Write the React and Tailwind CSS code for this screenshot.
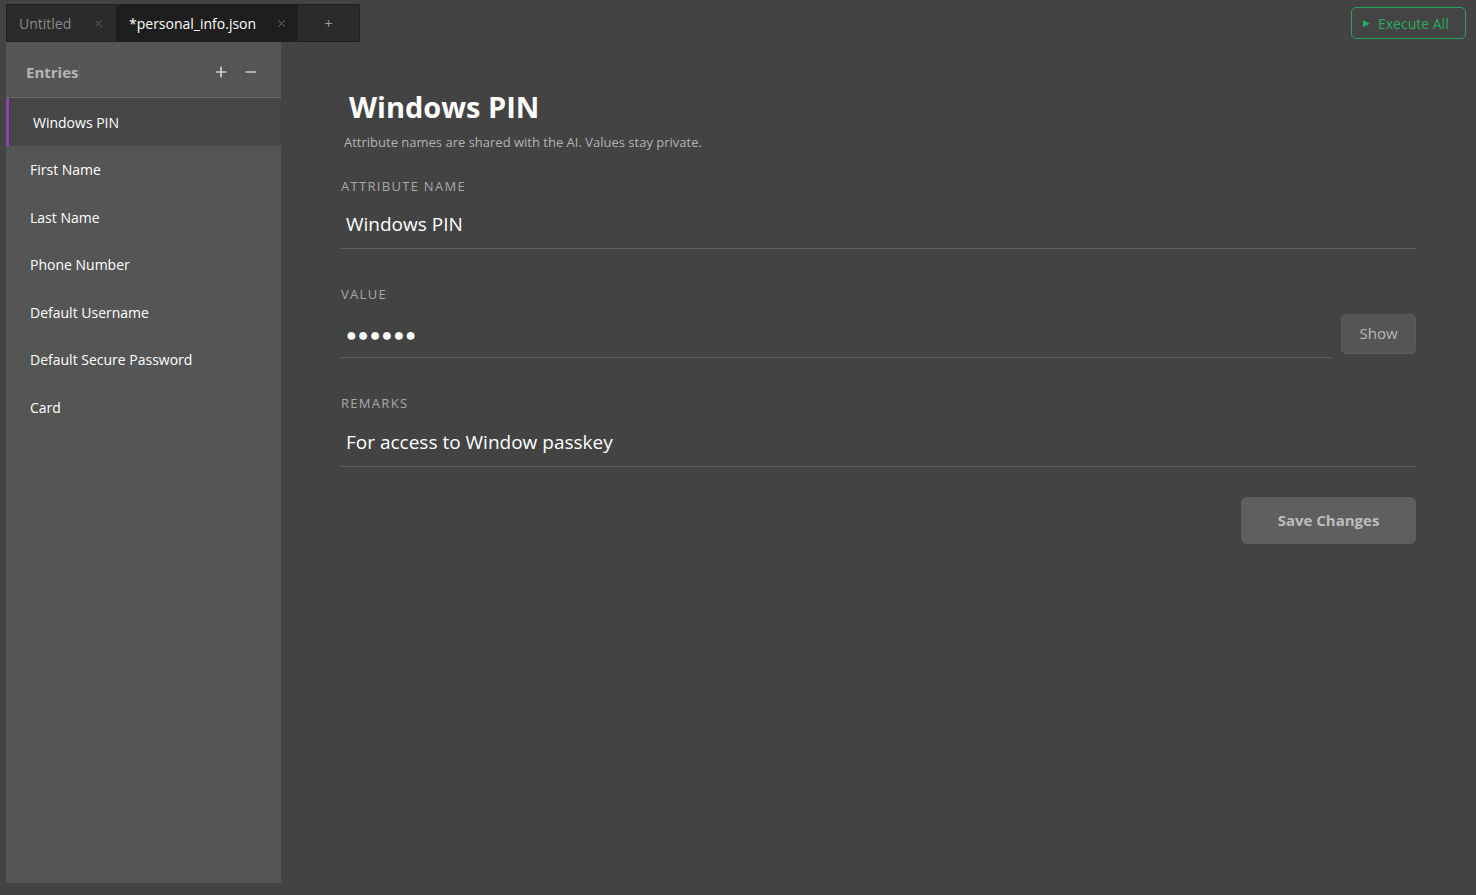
import React, { useState } from 'react';
import { Plus, Minus, X } from 'lucide-react';

const entries = [
  'Windows PIN',
  'First Name',
  'Last Name',
  'Phone Number',
  'Default Username',
  'Default Secure Password',
  'Card',
];

const Field = ({ label, children, className = '' }) => (
  <div className={className}>
    <div className="text-[13px] tracking-[0.1em] text-[#a8a8a8] leading-none">{label}</div>
    {children}
  </div>
);

export default function App() {
  const [selected, setSelected] = useState(0);

  return (
    <div
      className="w-[1476px] h-[895px] bg-[#434343] flex flex-col overflow-hidden text-white"
      style={{ fontFamily: '"Open Sans", "Noto Sans", sans-serif' }}
    >
      {/* Top bar */}
      <div className="flex items-start justify-between pl-[6px] pr-[10px] pt-[4px]">
        <div className="flex h-[38px] w-[354px] bg-[#2b2b2b] border border-[#202020]">
          <div className="flex items-center w-[109px] pl-[12px] pr-[12px] justify-between text-[14px] text-[#8a8a8a]">
            <span>Untitled</span>
            <X className="w-[11px] h-[11px] text-[#6a6a6a]" strokeWidth={2} />
          </div>
          <div className="flex items-center w-[182px] pl-[13px] pr-[11px] justify-between bg-[#1e1e1e] text-[14px] text-white">
            <span>*personal_info.json</span>
            <X className="w-[11px] h-[11px] text-[#777]" strokeWidth={2} />
          </div>
          <div className="flex-1 flex items-center justify-center text-[#9a9a9a] text-[15px]">+</div>
        </div>
        <button className="mt-[3px] h-[32px] w-[115px] flex items-center pl-[11px] gap-[8px] rounded-[5px] border border-[#25a65a] text-[#27ae60] text-[14px] bg-[#444]">
          <span className="text-[9px]">&#9654;</span>
          <span>Execute All</span>
        </button>
      </div>

      <div className="flex flex-1 min-h-0 pl-[6px] pb-[12px]">
        {/* Sidebar */}
        <div className="w-[275px] bg-[#555555] flex flex-col">
          <div className="h-[56px] flex items-center justify-between pl-[20px] pr-[22px] pt-[5px] border-b border-[#666]">
            <span className="text-[15px] font-bold text-[#b5b5b5] pr-[1px] border-r border-[#5e5e5e]">Entries</span>
            <div className="flex items-center gap-[14px] text-[#cfcfcf]">
              <Plus className="w-[16px] h-[16px]" strokeWidth={2.5} />
              <Minus className="w-[16px] h-[16px]" strokeWidth={2.5} />
            </div>
          </div>
          <ul className="flex flex-col">
            {entries.map((name, i) => (
              <li
                key={name}
                onClick={() => setSelected(i)}
                className={
                  i === selected
                    ? 'h-[48px] flex items-center pl-[24px] bg-[#474747] border-l-[3px] border-[#8e44ad] text-[14px] text-white'
                    : 'h-[47.5px] flex items-center pl-[24px] text-[14px] text-white'
                }
              >
                {name}
              </li>
            ))}
          </ul>
        </div>

        {/* Main */}
        <div className="flex-1 pl-[60px] pr-[60px] pt-[45px]">
          <h1 className="text-[29px] font-bold leading-[40px] pl-[8px] text-white">Windows PIN</h1>
          <p className="text-[13px] text-[#b3b3b3] pl-[3px] mt-[6px]">
            Attribute names are shared with the AI. Values stay private.
          </p>

          <Field label="ATTRIBUTE NAME" className="mt-[27px]">
            <div className="h-[48px] flex items-center pl-[5px] border-b border-[#5f5f5f] text-[19px] text-white mt-[8px]">
              Windows PIN
            </div>
          </Field>

          <Field label="VALUE" className="mt-[39px]">
            <div className="flex items-end gap-[10px] mt-[7px]">
              <div className="flex-1 h-[50px] flex items-center pl-[5px] pt-[5px] border-b border-[#5f5f5f] text-[18px] tracking-[1px] text-white">
                ●●●●●●
              </div>
              <button className="mb-[4px] w-[75px] h-[40px] rounded-[5px] bg-[#555] border border-[#5c5c5c] text-[15px] text-[#b8b8b8]">
                Show
              </button>
            </div>
          </Field>

          <Field label="REMARKS" className="mt-[39px]">
            <div className="h-[50px] flex items-center pl-[5px] pt-[3px] border-b border-[#5f5f5f] text-[19px] text-white mt-[7px]">
              For access to Window passkey
            </div>
          </Field>

          <div className="flex justify-end mt-[30px]">
            <button className="w-[175px] h-[47px] rounded-[6px] bg-[#5f5f5f] text-[15px] font-bold text-[#bdbdbd]">
              Save Changes
            </button>
          </div>
        </div>
      </div>
    </div>
  );
}
